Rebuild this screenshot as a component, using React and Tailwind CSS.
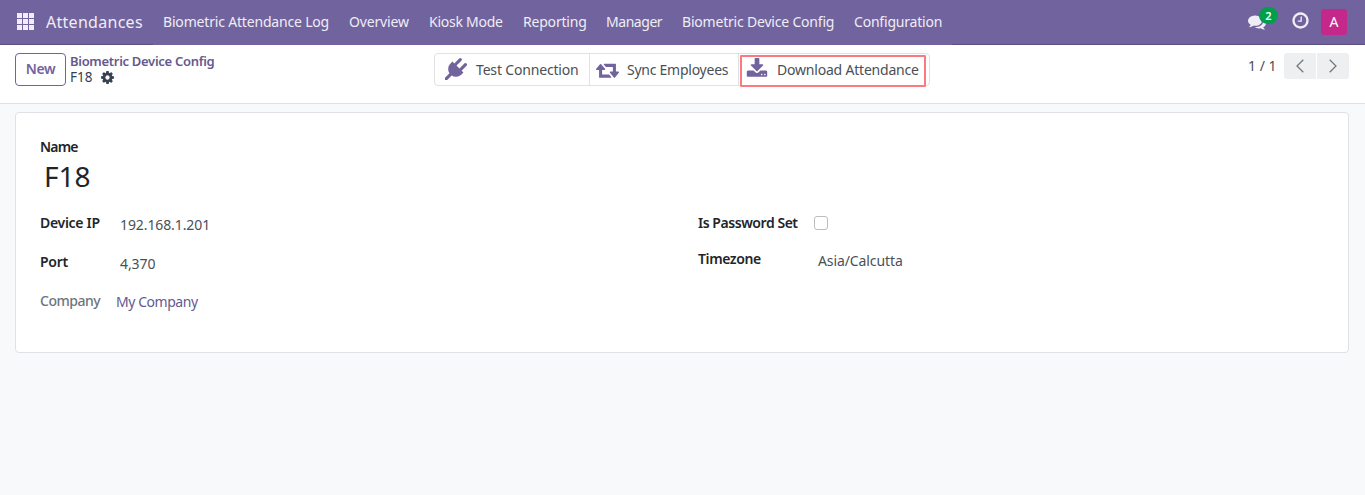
const PATHS = {
  plug: "M1755 453q37 38 37 90.5t-37 90.5l-401 400 150 150-160 160q-163 163-389.5 186.5t-411.5-100.5l-362 362h-181v-181l362-362q-124-185-100.5-411.5t186.5-389.5l160-160 150 150 400-401q38-37 91-37t90 37 37 90.5-37 90.5l-400 401 234 234 401-400q38-37 91-37t90 37z",
  retweet: "M1280 1504q0 13-9.5 22.5t-22.5 9.5h-960q-8 0-13.5-2t-9-7-5.5-8-3-11.5-1-11.5v-600h-192q-26 0-45-19t-19-45q0-24 15-41l320-384q19-22 49-22t49 22l320 384q15 17 15 41 0 26-19 45t-45 19h-192v384h576q16 0 25 11l160 192q7 10 7 21zm640-416q0 24-15 41l-320 384q-20 23-49 23t-49-23l-320-384q-15-17-15-41 0-26 19-45t45-19h192v-384h-576q-16 0-25-12l-160-192q-7-9-7-20 0-13 9.5-22.5t22.5-9.5h960q8 0 13.5 2t9 7 5.5 8 3 11.5 1 11.5v600h192q26 0 45 19t19 45z",
  download: "M1344 1344q0-26-19-45t-45-19-45 19-19 45 19 45 45 19 45-19 19-45zm256 0q0-26-19-45t-45-19-45 19-19 45 19 45 45 19 45-19 19-45zm128-224v320q0 40-28 68t-68 28h-1472q-40 0-68-28t-28-68v-320q0-40 28-68t68-28h465l135 136q58 56 136 56t136-56l136-136h464q40 0 68 28t28 68zm-325-569q17 41-14 70l-448 448q-18 19-45 19t-45-19l-448-448q-31-29-14-70 17-39 59-39h256v-448q0-26 19-45t45-19h256q26 0 45 19t19 45v448h256q42 0 59 39z",
  cog: "M1152 896q0-106-75-181t-181-75-181 75-75 181 75 181 181 75 181-75 75-181zm512-109v222q0 12-8 23t-20 13l-185 28q-19 54-39 91 35 50 107 138 10 12 10 25t-9 23q-27 37-99 108t-94 71q-12 0-26-9l-138-108q-44 23-91 38-16 136-29 186-7 28-36 28h-222q-14 0-24.5-8.5t-11.5-21.5l-28-184q-49-16-90-37l-141 107q-10 9-25 9-14 0-25-11-126-114-165-168-7-10-7-23 0-12 8-23 15-21 51-66.5t54-70.5q-27-50-41-99l-183-27q-13-2-21-12.5t-8-23.5v-222q0-12 8-23t19-13l186-28q14-46 39-92-40-57-107-138-10-12-10-24 0-10 9-23 26-36 98.5-107.5t94.5-71.5q13 0 26 10l138 107q44-23 91-38 16-136 29-186 7-28 36-28h222q14 0 24.5 8.5t11.5 21.5l28 184q49 16 90 37l142-107q9-9 24-9 13 0 25 10 129 119 165 170 7 8 7 22 0 12-8 23-15 21-51 66.5t-54 70.5q26 50 41 98l183 28q13 2 21 12.5t8 23.5z",
  comments: "M1408 768q0 139-94 257t-256.5 186.5-353.5 68.5q-86 0-176-16-124 88-278 128-36 9-86 16h-3q-11 0-20.5-8t-11.5-21q-1-3-1-6.5t.5-6.5 2-6l2.5-5 3.5-5.5 4-5 4.5-5 4-4.5q5-6 23-25t26-29.5 22.5-29 25-38.5 20.5-44q-124-72-195-177t-71-224q0-139 94-257t256.5-186.5 353.5-68.5 353.5 68.5 256.5 186.5 94 257zm384 256q0 120-71 224.5t-195 176.5q10 24 20.5 44t25 38.5 22.5 29 26 29.5 23 25q1 1 4 4.5t4.5 5 4 5 3.5 5.5l2.5 5 2 6 .5 6.5-1 6.5q-3 14-13 22t-22 7q-50-7-86-16-154-40-278-128-90 16-176 16-271 0-472-132 58 4 88 4 161 0 309-45t264-129q125-92 192-212t67-254q0-77-23-152 129 71 204 178t75 230z",
  clock: "M1024 544v448q0 14-9 23t-23 9h-320q-14 0-23-9t-9-23v-64q0-14 9-23t23-9h224v-352q0-14 9-23t23-9h64q14 0 23 9t9 23zm416 352q0-148-73-273t-198-198-273-73-273 73-198 198-73 273 73 273 198 198 273 73 273-73 198-198 73-273zm224 0q0 209-103 385.5t-279.5 279.5-385.5 103-385.5-103-279.5-279.5-103-385.5 103-385.5 279.5-279.5 385.5-103 385.5 103 279.5 279.5 103 385.5z",
};

function Icon({ name, className, viewBox = "0 0 1792 1792" }) {
  return (
    <svg viewBox={viewBox} fill="currentColor" className={"shrink-0 " + className} aria-hidden="true">
      <path d={PATHS[name]} />
    </svg>
  );
}

const MENUS = [
  ["Biometric Attendance Log", "w-[186px] tracking-[-0.18px]"],
  ["Overview", "w-20 tracking-[-0.15px]"],
  ["Kiosk Mode", "w-[94px] tracking-[-0.25px]"],
  ["Reporting", "w-[83px] tracking-[-0.2px]"],
  ["Manager", "w-[76px] tracking-[-0.45px]"],
  ["Biometric Device Config", "w-[172px] tracking-[-0.2px]"],
  ["Configuration", "w-[108px] tracking-[-0.2px]"],
];

function Navbar() {
  return (
    <header className="flex h-[45px] bg-[#71639e] text-[#efedf5]">
      <div className="flex w-[153px] items-center border-b border-[#5a4f7f] pl-[17px]">
        <svg viewBox="0 0 17 17" className="mb-[2px] size-[17px] shrink-0" fill="currentColor" aria-hidden="true">
          {[0, 6, 12].map((y) => [0, 6, 12].map((x) => <rect key={x + "-" + y} x={x} y={y} width="5" height="5" />))}
        </svg>
        <span className="ml-3 pb-px text-base tracking-[0.28px] whitespace-nowrap">Attendances</span>
      </div>
      <nav className="flex items-center">
        {MENUS.map(([label, cls]) => (
          <a key={label} className={"pb-px pl-[10px] whitespace-nowrap " + cls}>{label}</a>
        ))}
      </nav>
      <div className="flex grow items-center justify-end border-b border-[#5a4f7f] pr-[18px]">
        <div className="relative mr-[25px]">
          <Icon name="comments" className="size-[18px]" />
          <span className="absolute -top-[6px] left-[11px] flex h-[17px] w-[19px] items-center justify-center rounded-full bg-[#00a04a] text-[11px] font-semibold text-white">2</span>
        </div>
        <Icon name="clock" className="mr-[11px] mb-[3px] size-[19px]" />
        <span className="flex size-[26px] items-center justify-center rounded-[3px] bg-[#c4288a] text-sm text-white">A</span>
      </div>
    </header>
  );
}

function ControlPanel() {
  return (
    <div className="flex h-[59px] border-b border-[#dee2e6] bg-white pt-2 pl-[15px] text-[#495057]">
      <button className="h-[33px] w-[51px] rounded-[4px] border border-[#71639e] pb-[2px] font-semibold tracking-[-0.3px] text-[#71639e]">New</button>
      <div className="ml-[4px] w-[364px] text-[13px]/[16px] whitespace-nowrap">
        <div className="font-semibold tracking-[-0.3px] text-[#66598f]">Biometric Device Config</div>
        <div className="flex items-center text-[#374151]">
          <span className="w-[30px] text-[13.5px]">F18</span>
          <Icon name="cog" className="size-[15px]" />
        </div>
      </div>
      <div className="relative flex h-[33px] w-[496px] items-stretch rounded-[4px] border border-[#dee2e6] whitespace-nowrap">
        <button className="flex w-[155px] items-center border-r border-[#dee2e6] pl-[10px]">
          <Icon name="plug" className="mr-[9px] mb-px size-[22px] text-[#71639e]" />
          <span className="tracking-[-0.17px]">Test Connection</span>
        </button>
        <button className="flex w-[149px] items-center border-r border-[#dee2e6] pl-[6px]">
          <Icon name="retweet" viewBox="0 0 1920 1792" className="mr-[8px] h-[22px] w-[23px] text-[#71639e]" />
          <span className="tracking-[-0.25px]">Sync Employees</span>
        </button>
        <button className="flex items-center pl-[7px]">
          <Icon name="download" className="mr-[9px] mb-[2px] size-[22px] text-[#71639e]" />
          <span className="tracking-[-0.2px]">Download Attendance</span>
        </button>
        <div className="absolute top-[1px] left-[305px] h-[32px] w-[186px] rounded-[1px] border-2 border-[#fb7a7f]" />
      </div>
      <div className="ml-[318px] flex">
        <span className="w-9 pt-[3px] whitespace-nowrap">1 / 1</span>
        <button className="flex h-[26px] w-8 items-center justify-center rounded-l-[3px] bg-[#eeeff1] text-[#777]">
          <svg viewBox="0 0 8 14" className="h-[14px] w-2" fill="none" stroke="currentColor" strokeWidth="1.3"><path d="M7.3.7 1 7l6.3 6.3" /></svg>
        </button>
        <button className="ml-px flex h-[26px] w-8 items-center justify-center rounded-r-[3px] bg-[#eeeff1] text-[#777]">
          <svg viewBox="0 0 8 14" className="h-[14px] w-2" fill="none" stroke="currentColor" strokeWidth="1.3"><path d="M.7.7 7 7 .7 13.3" /></svg>
        </button>
      </div>
    </div>
  );
}

function FormSheet() {
  return (
    <section className="mx-[15px] mt-2 h-[241px] w-[1334px] rounded-[4px] border border-[#dee2e6] bg-white pt-6 pl-6 text-[#495057]">
      <div className="h-5 font-semibold tracking-[-0.8px] text-[#212529]">Name</div>
      <h1 className="h-[56px] pt-[2px] pl-1 text-[28px]/[34px] text-[#212529]">F18</h1>
      <div className="flex whitespace-nowrap">
        <div className="w-[658px]">
          <div className="flex h-[39px]">
            <span className="w-20 font-semibold tracking-[-0.3px] text-[#212529]">Device IP</span>
            <span className="pt-[2px] tracking-[-0.1px]">192.168.1.201</span>
          </div>
          <div className="flex h-[39px]">
            <span className="w-20 font-semibold tracking-[-0.3px] text-[#212529]">Port</span>
            <span className="pt-[2px] tracking-[-0.1px]">4,370</span>
          </div>
          <div className="flex">
            <span className="w-[76px] font-medium tracking-[-0.5px] text-[#6c757d]">Company</span>
            <span className="pt-px tracking-[-0.45px] text-[#66598f]">My Company</span>
          </div>
        </div>
        <div>
          <div className="flex h-9">
            <span className="w-[116px] font-semibold tracking-[-0.45px] text-[#212529]">Is Password Set</span>
            <span className="mt-[3px] size-[14px] rounded-[3px] border border-[#b9bdc1]" />
          </div>
          <div className="flex">
            <span className="w-[120px] font-semibold tracking-[-0.4px] text-[#212529]">Timezone</span>
            <span className="pt-[2px] tracking-[-0.1px]">Asia/Calcutta</span>
          </div>
        </div>
      </div>
    </section>
  );
}

export default function App() {
  return (
    <div className="h-[495px] w-[1365px] overflow-hidden bg-[#f8f9fa] font-['Noto_Sans',sans-serif] text-[14px]/[20px]">
      <Navbar />
      <ControlPanel />
      <FormSheet />
    </div>
  );
}
